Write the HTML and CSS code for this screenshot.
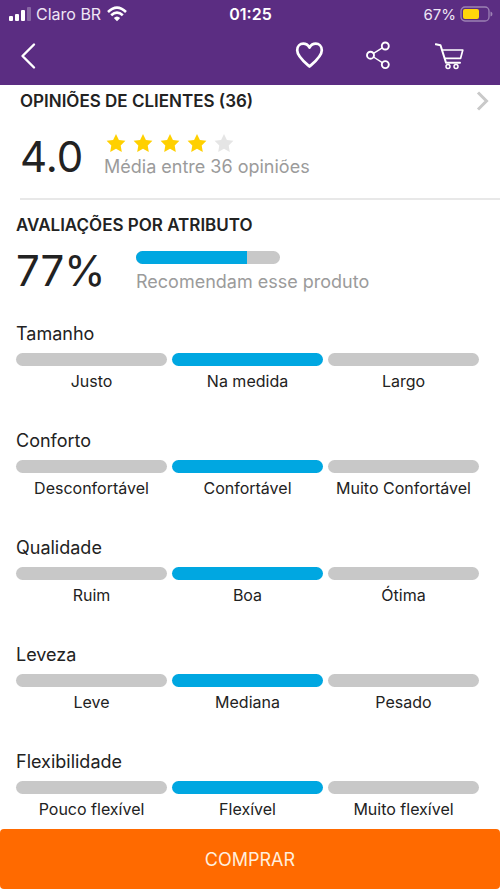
FILE: index.html
```html
<!DOCTYPE html>
<html lang="pt-BR">
<head>
<meta charset="utf-8">
<meta name="viewport" content="width=device-width, initial-scale=1">
<title>Opiniões de clientes</title>
<link rel="stylesheet" href="styles.css">
</head>
<body>
<div class="screen">
  <header class="top">
    <div class="status">
      <div class="status-left">
        <svg width="24" height="16" viewBox="0 0 24 16" fill="#fff" aria-hidden="true"><rect x="1" y="10" width="4" height="5" rx="1"/><rect x="7" y="8" width="4" height="7" rx="1"/><rect x="13" y="4" width="4" height="11" rx="1"/><rect x="19" y="1" width="4" height="14" rx="1" opacity=".28"/></svg>
        <span>Claro BR</span>
        <svg class="wifi" width="20" height="16" viewBox="0 0 20 16" fill="none" stroke="#fff" stroke-width="2.6" aria-hidden="true"><path d="M1 6Q10-2.6 19 6M4.2 9.3Q10 3.8 15.8 9.3"/><path d="M6.8 12Q10 9 13.200 12L10 15.200z" fill="#fff" stroke="none"/></svg>
      </div>
      <time class="clock">01:25</time>
      <div class="status-right">
        <span>67%</span>
        <svg width="33" height="16" viewBox="0 0 33 16" aria-hidden="true"><rect x="1" y="1" width="28" height="14" rx="4" fill="none" stroke="#9c81b4" stroke-width="1.300"/><rect x="3" y="3" width="16" height="10" rx="2" fill="#ffd60a"/><path d="M30.500 5.500q2 .5 2 2.500t-2 2.500z" fill="#9c81b4"/></svg>
      </div>
    </div>
    <nav class="nav">
      <button class="icon-btn back" aria-label="Voltar"><svg width="30" height="30" viewBox="0 0 30 30"><path d="M20 3.500 8.500 15 20 26.500" stroke-width="2.400"/></svg></button>
      <button class="icon-btn" aria-label="Favoritar"><svg width="30" height="30" viewBox="0 0 30 30"><path d="M14.500 25.500C10 21.500 2.200 15.500 2.200 9.200 2.200 5.300 5 2.700 8.300 2.700c2.600 0 4.700 1.300 6.200 3.800 1.500-2.500 3.600-3.800 6.200-3.800 3.300 0 6.100 2.600 6.100 6.500 0 6.300-7.800 12.300-12.300 16.300z" stroke-width="2.700"/></svg></button>
      <button class="icon-btn" aria-label="Compartilhar"><svg width="30" height="30" viewBox="0 0 30 30"><g stroke-width="1.900"><circle cx="5.500" cy="14.200" r="3.500"/><circle cx="20.300" cy="5" r="3.500"/><circle cx="20.300" cy="23.600" r="3.500"/></g><path d="M8.500 12.400 17.300 6.900M8.500 16 17.300 21.700" stroke-width="1.400"/></svg></button>
      <button class="icon-btn" aria-label="Carrinho"><svg width="30" height="30" viewBox="0 0 30 30"><path d="M.8 3.200l4.700 1L11 21.700H25" stroke-width="2"/><path d="M7.500 9H27.800L25.600 17.300H10" stroke-width="1.700"/><circle cx="13" cy="25.500" r="2" stroke-width="1.500"/><circle cx="21" cy="25.500" r="2" stroke-width="1.500"/></svg></button>
    </nav>
  </header>

  <main>
    <section class="opinions">
      <a class="opinions-link" href="#opinioes">
        <h2>OPINIÕES DE CLIENTES (36)</h2>
        <svg width="14" height="20" viewBox="0 0 14 20" fill="none" stroke="#c9c9c9" stroke-width="3" aria-hidden="true"><path d="M2 1.500 10.500 10 2 18.500"/></svg>
      </a>
      <div class="score">
        <span class="big">4.0</span>
        <div class="score-info">
          <div class="stars" role="img" aria-label="4 de 5 estrelas">
            <svg viewBox="0 0 20 19"><path d="M10 .5l2.900 5.900 6.500.9-4.700 4.600 1.100 6.500L10 15.300l-5.800 3.100 1.100-6.500L.6 7.300l6.500-.9z"/></svg>
            <svg viewBox="0 0 20 19"><path d="M10 .5l2.900 5.900 6.500.9-4.700 4.600 1.100 6.500L10 15.300l-5.800 3.100 1.100-6.500L.6 7.300l6.500-.9z"/></svg>
            <svg viewBox="0 0 20 19"><path d="M10 .5l2.900 5.900 6.500.9-4.700 4.600 1.100 6.500L10 15.300l-5.800 3.100 1.100-6.500L.6 7.300l6.500-.9z"/></svg>
            <svg viewBox="0 0 20 19"><path d="M10 .5l2.900 5.900 6.500.9-4.700 4.600 1.100 6.500L10 15.300l-5.800 3.100 1.100-6.500L.6 7.300l6.500-.9z"/></svg>
            <svg class="off" viewBox="0 0 20 19"><path d="M10 .5l2.900 5.900 6.500.9-4.700 4.600 1.100 6.500L10 15.300l-5.800 3.100 1.100-6.500L.6 7.300l6.500-.9z"/></svg>
          </div>
          <p class="muted">Média entre 36 opiniões</p>
        </div>
      </div>
    </section>

    <section class="ratings">
      <h2>AVALIAÇÕES POR ATRIBUTO</h2>
      <div class="recommend">
        <span class="big">77%</span>
        <div class="recommend-info">
          <div class="meter"><div class="meter-fill" style="width:77%"></div></div>
          <p class="muted">Recomendam esse produto</p>
        </div>
      </div>

      <div class="attributes">
        <div class="attribute">
          <h3>Tamanho</h3>
          <ul class="scale"><li>Justo</li><li class="on">Na medida</li><li>Largo</li></ul>
        </div>
        <div class="attribute">
          <h3>Conforto</h3>
          <ul class="scale"><li>Desconfortável</li><li class="on">Confortável</li><li>Muito Confortável</li></ul>
        </div>
        <div class="attribute">
          <h3>Qualidade</h3>
          <ul class="scale"><li>Ruim</li><li class="on">Boa</li><li>Ótima</li></ul>
        </div>
        <div class="attribute">
          <h3>Leveza</h3>
          <ul class="scale"><li>Leve</li><li class="on">Mediana</li><li>Pesado</li></ul>
        </div>
        <div class="attribute">
          <h3>Flexibilidade</h3>
          <ul class="scale"><li>Pouco flexível</li><li class="on">Flexível</li><li>Muito flexível</li></ul>
        </div>
      </div>
    </section>
  </main>

  <button class="buy">COMPRAR</button>
</div>
</body>
</html>
```
FILE: styles.css
```css
* {
  box-sizing: border-box;
}

body,
h2,
h3,
p,
ul {
  margin: 0;
  padding: 0;
}

body {
  background: #fff;
  color: #222;
  font-family: Inter, "Liberation Sans", sans-serif;
}

svg {
  display: block;
  flex: none;
}

button {
  border: 0;
  padding: 0;
  font-family: inherit;
}

.screen {
  display: flex;
  flex-direction: column;
  min-height: 100vh;
}

.top {
  background: #5b2d82;
  color: #fff;
}

.status {
  display: grid;
  grid-template-columns: 1fr auto 1fr;
  align-items: center;
  height: 28px;
  padding: 0 7px 0 8px;
  font-size: 16px;
}

.status-left,
.status-right {
  display: flex;
  align-items: center;
  gap: 4px;
  color: #efe6f5;
}

.wifi {
  margin-left: 2px;
}

.status-right {
  justify-content: flex-end;
  font-size: 15px;
}

.clock {
  font-weight: 600;
}

.nav {
  display: flex;
  align-items: center;
  gap: 40px;
  height: 57px;
  padding: 0 35px 2px 14px;
}

.icon-btn {
  background: none;
}

.icon-btn svg {
  fill: none;
  stroke: #fff;
  stroke-linecap: round;
  stroke-linejoin: round;
}

.back {
  margin-right: auto;
}

main {
  flex: 1;
}

h2 {
  font-size: 17px;
  font-weight: 600;
  line-height: 24px;
}

.opinions {
  margin-left: 20px;
  padding-top: 4px;
  border-bottom: 2px solid #e8e8e8;
}

.opinions-link {
  display: flex;
  align-items: center;
  justify-content: space-between;
  padding-right: 10px;
  color: inherit;
  text-decoration: none;
}

.score {
  display: grid;
  grid-template-columns: 84px 1fr;
  padding: 20px 0 17px;
}

.big {
  font-size: 42px;
  line-height: 48px;
}

.stars {
  display: flex;
  gap: 7px;
  padding-left: 2px;
}

.stars svg {
  width: 20px;
  height: 20px;
  fill: #ffd000;
}

.stars .off {
  fill: #e5e5e5;
}

.muted {
  color: #9b9b9b;
  font-size: 18px;
  line-height: 28px;
}

.ratings {
  padding: 13px 21px 10px 16px;
}

.recommend {
  display: grid;
  grid-template-columns: 120px 1fr;
  padding-top: 10px;
}

.recommend-info {
  padding-top: 4px;
}

.meter {
  width: 144px;
  height: 13px;
  margin-bottom: 4px;
  overflow: hidden;
  border-radius: 7px;
  background: #c8c8c8;
}

.meter-fill {
  height: 100%;
  background: #00a7e1;
}

.attributes {
  display: grid;
  gap: 38px;
  margin-top: 26px;
}

h3 {
  font-size: 18px;
  font-weight: 400;
  line-height: 24px;
}

.scale {
  display: grid;
  grid-template-columns: repeat(3, 1fr);
  gap: 5px;
  margin-top: 7px;
  list-style: none;
  font-size: 16px;
  line-height: 20px;
  text-align: center;
  white-space: nowrap;
}

.scale li::before {
  content: "";
  display: block;
  height: 13px;
  margin-bottom: 5px;
  border-radius: 7px;
  background: #c8c8c8;
}

.scale .on::before {
  background: #00a7e1;
}

.buy {
  position: sticky;
  bottom: 0;
  flex: none;
  height: 60px;
  border-radius: 4px;
  background: #ff6a00;
  color: #ffeedd;
  font-size: 18px;
}
```
